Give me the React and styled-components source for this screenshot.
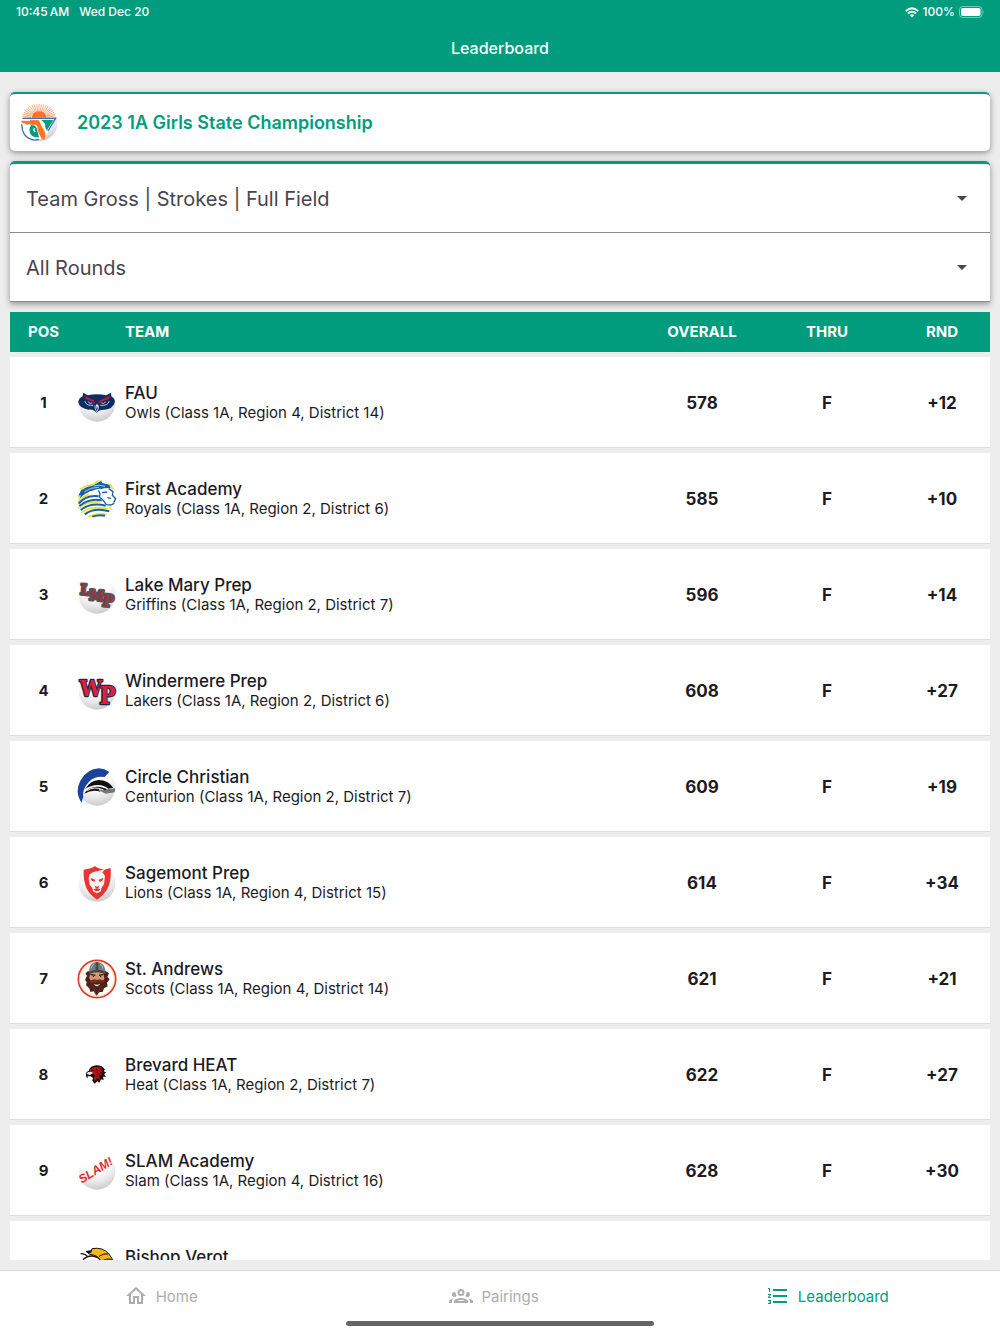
import React, { useState } from 'react';
import styled, { createGlobalStyle, ThemeProvider } from 'styled-components';
import { MdArrowDropDown, MdFormatListNumbered, MdOutlineHome } from 'react-icons/md';

const theme = {
  primary: '#009c7e',
  background: '#ededed',
  surface: '#ffffff',
  text: '#1c1b1f',
  textMuted: '#49454f',
  inactive: '#aeaeae',
  border: '#dcdcdc',
};

const GlobalStyle = createGlobalStyle`
  * {
    box-sizing: border-box;
  }

  body {
    margin: 0;
    font-family: Inter, "Liberation Sans", sans-serif;
    color: ${props => props.theme.text};
    background: ${props => props.theme.background};
  }
`;

const Screen = styled.div`
  display: flex;
  flex-direction: column;
  height: 100vh;
`;

const Header = styled.header`
  background: ${props => props.theme.primary};
  color: #fff;
`;

const StatusBar = styled.div`
  display: flex;
  justify-content: space-between;
  padding: 0 15px 0 16px;
  font-size: 12px;
  font-weight: 500;
  line-height: 24px;
`;

const StatusGroup = styled.div`
  display: flex;
  align-items: center;
  gap: ${props => props.$gap}px;
`;

const ScreenTitle = styled.h1`
  margin: 0;
  font-size: 16px;
  font-weight: 500;
  line-height: 48px;
  text-align: center;
`;

const Main = styled.main`
  flex: 1;
  min-height: 0;
  display: flex;
  flex-direction: column;
  gap: 10px;
  padding: 20px 10px 10px;
`;

const Card = styled.section`
  flex-shrink: 0;
  background: ${props => props.theme.surface};
  border-top: ${props => props.$accent}px solid ${props => props.theme.primary};
  border-radius: ${props => (props.$flatBottom ? '5px 5px 0 0' : '5px')};
  box-shadow: 0 2px 6px rgba(0, 0, 0, 0.4);
`;

const EventHeading = styled.div`
  display: flex;
  align-items: center;
  gap: 19px;
  padding: 10px 10px 9px;
`;

const EventName = styled.h2`
  margin: 0;
  font-size: 18px;
  font-weight: 600;
  line-height: 24px;
  color: ${props => props.theme.primary};
`;

const FilterField = styled.div`
  position: relative;
  border-bottom: 1px solid #8b8b8d;

  svg {
    position: absolute;
    top: 50%;
    right: 16px;
    font-size: 24px;
    color: ${props => props.theme.textMuted};
    transform: translateY(-50%);
    pointer-events: none;
  }
`;

const FilterSelect = styled.select`
  display: block;
  width: 100%;
  height: 68px;
  padding: 2px 48px 0 16px;
  border: 0;
  background: transparent;
  appearance: none;
  font-family: inherit;
  font-size: 20px;
  color: ${props => props.theme.textMuted};
`;

const Standings = styled.div`
  flex: 1;
  min-height: 0;
  overflow-y: auto;
  scrollbar-width: none;
`;

const Table = styled.table`
  width: 100%;
  margin-top: -5px;
  border-spacing: 0 5px;
`;

const HeadCell = styled.th`
  width: ${props => (props.$width ? `${props.$width}px` : 'auto')};
  padding: 10px 0 10px ${props => props.$indent || 0}px;
  background: ${props => props.theme.primary};
  color: #fff;
  font-size: 15px;
  font-weight: 700;
  line-height: 20px;
  text-align: ${props => (props.$indent ? 'left' : 'center')};
`;

const Cell = styled.td`
  padding: 26px 0 24px;
  background: ${props => props.theme.surface};
  border-bottom: 1px solid ${props => props.theme.border};
  font-size: ${props => (props.$small ? 15 : 17)}px;
  font-weight: 700;
  line-height: 20px;
  text-align: center;
`;

const Team = styled.div`
  display: flex;
  align-items: center;
  gap: 8px;
  text-align: left;
`;

const TeamName = styled.div`
  font-size: 17px;
  font-weight: 500;
`;

const TeamDetail = styled.div`
  font-size: 15px;
  font-weight: 400;
`;

const Logo = styled.svg`
  flex-shrink: 0;
  width: ${props => props.$size}px;
  height: ${props => props.$size}px;
  display: block;
`;

const Footer = styled.footer`
  background: ${props => props.theme.surface};
  border-top: 1px solid ${props => props.theme.border};
  padding-bottom: 8px;
`;

const Tabs = styled.nav`
  display: grid;
  grid-template-columns: repeat(3, 1fr);
`;

const Tab = styled.a`
  display: flex;
  align-items: center;
  justify-content: center;
  gap: 8px;
  height: 50px;
  padding-right: 12px;
  font-size: 15px;
  color: ${props => (props.$active ? props.theme.primary : props.theme.inactive)};
  text-decoration: none;

  svg {
    font-size: 24px;
  }
`;

const HomeIndicator = styled.div`
  width: 308px;
  height: 5px;
  margin: 0 auto;
  border-radius: 3px;
  background: #666;
`;

const WifiIcon = () => (
  <svg width="14" height="11" viewBox="0 0 14 11" fill="none" stroke="#fff" strokeWidth="1.9">
    <path d="M0.8 4.1Q7 -1.6 13.2 4.1" />
    <path d="M3 6.5Q7 3 11 6.5" />
    <path d="M7 10.4L4.8 8.2Q7 6.4 9.2 8.2Z" fill="#fff" stroke="none" />
  </svg>
);

const BatteryIcon = () => (
  <svg width="26" height="12" viewBox="0 0 26 12">
    <rect x="0.5" y="0.5" width="22.5" height="11" rx="3.2" fill="none" stroke="#fff" strokeOpacity="0.45" />
    <rect x="2" y="2" width="19.5" height="8" rx="1.8" fill="#fff" />
    <path d="M24.3 4.2Q26 6 24.3 7.8Z" fill="#fff" fillOpacity="0.5" />
  </svg>
);

const GroupIcon = () => (
  <svg width="24" height="24" viewBox="0 0 24 24" fill="currentColor">
    <path d="M12,5A3.5,3.5 0 0,0 8.5,8.5A3.5,3.5 0 0,0 12,12A3.5,3.5 0 0,0 15.5,8.5A3.5,3.5 0 0,0 12,5M12,7A1.5,1.5 0 0,1 13.5,8.5A1.5,1.5 0 0,1 12,10A1.5,1.5 0 0,1 10.5,8.5A1.5,1.5 0 0,1 12,7M5.5,8A2.5,2.5 0 0,0 3,10.5C3,11.44 3.53,12.25 4.29,12.68C4.65,12.88 5.06,13 5.5,13C5.94,13 6.35,12.88 6.71,12.68C7.08,12.47 7.39,12.17 7.62,11.81C6.89,10.86 6.5,9.7 6.5,8.5C6.5,8.41 6.5,8.31 6.5,8.22C6.2,8.08 5.86,8 5.5,8M18.5,8C18.14,8 17.8,8.08 17.5,8.22C17.5,8.31 17.5,8.41 17.5,8.5C17.5,9.7 17.11,10.86 16.38,11.81C16.5,12 16.63,12.15 16.78,12.3C16.94,12.45 17.1,12.58 17.29,12.68C17.65,12.88 18.06,13 18.5,13C18.94,13 19.35,12.88 19.71,12.68C20.47,12.25 21,11.44 21,10.5A2.5,2.5 0 0,0 18.5,8M12,14C9.66,14 5,15.17 5,17.5V19H19V17.5C19,15.17 14.34,14 12,14M4.71,14.55C2.78,14.78 0,15.76 0,17.5V19H3V17.07C3,16.06 3.69,15.22 4.71,14.55M19.29,14.55C20.31,15.22 21,16.06 21,17.07V19H24V17.5C24,15.76 21.22,14.78 19.29,14.55M12,16C13.53,16 15.24,16.5 16.23,17H7.77C8.76,16.5 10.47,16 12,16Z" />
  </svg>
);

const Gradients = () => (
  <svg width="0" height="0" style={{ position: 'absolute' }} aria-hidden="true">
    <defs>
      <radialGradient id="ball" cx="0.42" cy="0.12" r="0.92">
        <stop offset="0.45" stopColor="#ffffff" />
        <stop offset="0.75" stopColor="#e6e6e6" />
        <stop offset="1" stopColor="#c6c6c6" />
      </radialGradient>
    </defs>
  </svg>
);

const Ball = () => <circle cx="60" cy="61" r="55" fill="url(#ball)" />;

const rays = Array.from({ length: 23 }, (_, i) => {
  const angle = Math.PI + (i * Math.PI) / 22;
  return {
    x1: 57 + 24 * Math.cos(angle),
    y1: 42 + 18 * Math.sin(angle),
    x2: 57 + 51 * Math.cos(angle),
    y2: 42 + 42 * Math.sin(angle),
  };
});

const EventLogo = () => (
  <Logo $size={38} viewBox="0 0 114 114">
    <circle cx="58" cy="57" r="54" fill="url(#ball)" />
    <path d="M0 0H114V42H0Z" fill="#fff" />
    <g stroke="#f88f52" strokeWidth="2.2">
      {rays.map((ray, i) => (
        <line key={i} {...ray} />
      ))}
    </g>
    <path d="M35 41Q38 22 57 22Q76 22 80 41Z" fill="#ff7224" />
    <path d="M8 43H109L87 80Q74 106 46 109Q8 106 5 60Z" fill="#fff" />
    <path d="M8 43H107L84 81" fill="none" stroke="#3c6cb5" strokeWidth="4" />
    <path d="M5 61Q6 98 35 107Q45 110 57 106" fill="none" stroke="#3c6cb5" strokeWidth="4" />
    <path d="M64 48H100L80 80Q73 70 76 60Z" fill="#009c7e" />
    <path d="M30 60Q44 60 50 72L57 100Q33 102 29 84Q27 71 33 65Z" fill="#009c7e" />
    <path d="M43 72Q39 79 46 84" fill="none" stroke="#fff" strokeWidth="4" />
    <path d="M4 50L30 50L31 47L57 48L65 66Q77 82 77 94Q78 107 69 109Q60 99 56 87Q51 79 52 68Q46 59 39 64L30 60L21 63Q16 57 4 57Z" fill="#ff7224" stroke="#fff" strokeWidth="1" />
  </Logo>
);

const OwlLogo = () => (
  <Logo $size={40} viewBox="0 0 120 120">
    <Ball />
    <path d="M19 29L32 37Q60 31 87 37L102 29L103 40Q116 48 113 59Q108 77 82 80Q70 80 65 84L59 89L53 84Q45 79 34 80Q7 76 4 58Q4 46 17 40Z" fill="#0d2c62" />
    <path d="M22 38L50 52L56 63Q38 51 25 49Z" fill="#c4143c" />
    <path d="M99 38L69 52L63 63Q82 51 96 49Z" fill="#c4143c" />
    <g fill="none" stroke="#dce3f0" strokeWidth="2.5">
      <path d="M23 54Q29 70 49 67" />
      <path d="M97 54Q91 70 70 67" />
      <path d="M33 56Q39 65 46 60M86 56Q80 65 73 60" />
      <path d="M54 67Q53 79 59 86Q66 79 64 67" />
    </g>
    <path d="M57 66Q60 61 63 66L60 80Z" fill="#fff" />
  </Logo>
);

const RoyalLogo = () => (
  <Logo $size={40} viewBox="0 0 120 120">
    <path d="M9 32L30 22L28 16L45 16L63 7L73 3L78 9L99 13L104 25L111 35L109 48L117 58L111 79L96 83L105 92Q91 114 60 115Q23 113 9 87L2 81Q5 70 3 60L9 50L2 53Z" fill="#fff" />
    <g fill="none" stroke="#f0df2e" strokeWidth="5">
      <path d="M9 31L31 20L46 17L63 7L75 6M4 56L15 42M3 68Q20 50 36 46M4 88Q28 66 70 69M13 101Q42 78 92 90M34 113Q58 101 88 106M99 15L107 30M97 84L105 92" />
    </g>
    <path d="M12 34L32 23L46 20L72 6L76 12L97 17L101 28Q86 25 73 30Q61 28 50 34Q24 40 7 60L12 48L4 50Z" fill="#1761a5" />
    <g fill="none" stroke="#fff" strokeWidth="2">
      <path d="M22 38Q42 24 66 25M50 21Q66 16 84 22" />
    </g>
    <g fill="none" stroke="#1761a5" strokeWidth="6">
      <path d="M5 74Q29 46 65 52M7 81Q37 56 74 64M11 93Q42 69 86 80M23 106Q52 84 97 97M46 113Q66 106 84 110" />
      <path d="M64 34Q72 45 67 53Q79 62 88 77L101 78L112 73" strokeWidth="4" />
      <path d="M75 41L91 39M95 29L108 38L106 49L116 59L110 71M91 56L102 58" strokeWidth="4" />
    </g>
  </Logo>
);

const LmpLogo = () => (
  <Logo $size={40} viewBox="0 0 120 120">
    <Ball />
    <g
      fontFamily="'DejaVu Serif Condensed', 'DejaVu Serif', serif"
      fontWeight="700"
      fill="#9a3443"
      stroke="#545457"
      strokeWidth="9"
      strokeLinejoin="round"
      paintOrder="stroke"
    >
      <text x="9" y="58" fontSize="43" transform="rotate(5 9 58)">L</text>
      <text x="75" y="93" fontSize="50" transform="rotate(5 75 93)">P</text>
      <text x="36" y="74" fontSize="43" transform="rotate(5 36 74)">M</text>
    </g>
  </Logo>
);

const WpLogo = () => (
  <Logo $size={40} viewBox="0 0 120 120">
    <Ball />
    <g
      fontFamily="'DejaVu Serif Condensed', 'DejaVu Serif', serif"
      fontWeight="700"
      fill="#dd2138"
      stroke="#102a5c"
      strokeWidth="7"
      strokeLinejoin="round"
      paintOrder="stroke"
    >
      <text x="8" y="76" fontSize="66">W</text>
      <text x="67" y="99" fontSize="72">P</text>
    </g>
  </Logo>
);

const CenturionLogo = () => (
  <Logo $size={40} viewBox="0 0 120 120">
    <Ball />
    <path d="M14 107Q-8 76 10 41Q30 5 66 4Q83 5 97 15L83 30Q55 25 36 44Q15 67 19 88Z" fill="#1c439b" />
    <path d="M25 66Q39 40 65 39Q94 40 109 62L94 65Q78 53 63 54Q40 55 25 66Z" fill="#111" />
    <path d="M22 80Q36 58 61 59Q81 60 91 68L114 65L112 74L88 78Q75 67 65 67L70 74Q46 66 22 80Z" fill="#111" />
    <path d="M31 71Q50 56 80 69" fill="none" stroke="#fff" strokeWidth="3" />
    <path d="M83 69L114 64L112 76L86 80Q70 70 60 71Q72 68 83 69Z" fill="#777" />
  </Logo>
);

const LionLogo = () => (
  <Logo $size={40} viewBox="0 0 120 120">
    <Ball />
    <path d="M20 20Q44 17 54 9Q62 17 82 20L101 15Q104 53 91 78Q79 98 60 110Q40 97 30 79Q18 53 20 20Z" fill="#e93434" />
    <path d="M38 34Q50 25 60 25L84 19L76 28L84 39L81 64L73 75L72 85L60 91L48 85L46 75L38 65L35 45Z" fill="#f7f4f4" />
    <path d="M41 45L55 50L52 57L43 52ZM79 45L65 50L68 57L77 52Z" fill="#e93434" />
    <path d="M53 68L60 71L67 68L64 76H56ZM49 79L60 76L71 79L65 84H55Z" fill="#e93434" />
  </Logo>
);

const ScotLogo = () => (
  <Logo $size={40} viewBox="0 0 120 120">
    <circle cx="60" cy="60" r="56" fill="#fff" stroke="#e23434" strokeWidth="5" />
    <circle cx="60" cy="60" r="52" fill="none" stroke="#f2cc58" strokeWidth="2" />
    <path d="M32 37L25 44L30 50L24 63L29 69L27 79L37 88L40 99L50 97L58 110L68 99L77 99L81 88L92 82L90 71L98 61L91 54L96 43L85 35Z" fill="#512118" />
    <path d="M39 42Q59 34 80 43L82 59L77 67L60 63L43 67L37 58Z" fill="#d99873" />
    <path d="M36 41Q35 10 60 9Q84 10 86 41Q62 31 36 41Z" fill="#737c7d" />
    <path d="M56 10H64V35H56ZM36 39Q60 25 86 39V45Q60 34 36 45Z" fill="#414a4c" />
    <path d="M42 29Q44 18 51 16M69 16Q78 20 78 29" fill="none" stroke="#aeb5b3" strokeWidth="3" />
    <path d="M40 46L55 49M66 49L80 46" stroke="#3b1a15" strokeWidth="4" />
    <circle cx="49" cy="52" r="2" fill="#111" />
    <circle cx="71" cy="52" r="2" fill="#111" />
    <path d="M36 68Q49 56 60 63Q71 56 84 68Q72 76 60 69Q47 76 36 68Z" fill="#6e2e20" />
    <path d="M50 75Q60 79 70 75Q66 81 60 82Q53 81 50 75Z" fill="#f2e6dc" />
    <path d="M40 80Q52 84 56 102M77 80Q66 89 62 102" fill="none" stroke="#7e3826" strokeWidth="2" />
  </Logo>
);

const HawkLogo = () => (
  <Logo $size={40} viewBox="0 0 120 120">
    <path d="M27 63L28 52L35 47Q40 32 59 31Q77 31 84 44L80 48L88 53L81 57L87 65L78 65L80 75L72 73L67 83L61 79L53 86L46 77L48 68L40 64L32 64L31 71Z" fill="#16090a" />
    <path d="M38 46Q45 35 61 35Q74 36 79 44L68 43L80 54L66 50L78 62L65 58L70 71L60 70L54 79L50 72L54 60L44 55Z" fill="#b4121b" />
    <path d="M30 53Q40 47 48 54L39 60L31 58Z" fill="#e9e9e9" />
    <path d="M42 46L54 48M58 40Q64 47 60 65" fill="none" stroke="#5c0b10" strokeWidth="3" />
  </Logo>
);

const SlamLogo = () => (
  <Logo $size={40} viewBox="0 0 120 120">
    <Ball />
    <text
      transform="translate(14 98) rotate(-32)"
      fontFamily="'Liberation Sans', sans-serif"
      fontSize="36"
      fontStyle="italic"
      fill="#e22c36"
    >
      SLAM!
    </text>
  </Logo>
);

const VikingLogo = () => (
  <Logo $size={40} viewBox="0 0 120 120">
    <Ball />
    <path d="M11 20Q26 20 33 31M18 38Q29 26 47 27Q69 31 73 44" fill="none" stroke="#111" strokeWidth="4" />
    <path d="M27 13L42 16L45 5Q78 -1 96 21Q108 34 108 50L73 45Q65 24 38 22Z" fill="#f8b617" stroke="#111" strokeWidth="3" />
    <path d="M66 28Q81 18 94 21M73 42Q90 33 104 37" fill="none" stroke="#111" strokeWidth="3" />
    <path d="M28 12L36 21L45 9Z" fill="#111" />
  </Logo>
);

const teams = [
  { pos: 1, name: 'FAU', detail: 'Owls (Class 1A, Region 4, District 14)', overall: 578, rnd: '+12', logo: OwlLogo },
  { pos: 2, name: 'First Academy', detail: 'Royals (Class 1A, Region 2, District 6)', overall: 585, rnd: '+10', logo: RoyalLogo },
  { pos: 3, name: 'Lake Mary Prep', detail: 'Griffins (Class 1A, Region 2, District 7)', overall: 596, rnd: '+14', logo: LmpLogo },
  { pos: 4, name: 'Windermere Prep', detail: 'Lakers (Class 1A, Region 2, District 6)', overall: 608, rnd: '+27', logo: WpLogo },
  { pos: 5, name: 'Circle Christian', detail: 'Centurion (Class 1A, Region 2, District 7)', overall: 609, rnd: '+19', logo: CenturionLogo },
  { pos: 6, name: 'Sagemont Prep', detail: 'Lions (Class 1A, Region 4, District 15)', overall: 614, rnd: '+34', logo: LionLogo },
  { pos: 7, name: 'St. Andrews', detail: 'Scots (Class 1A, Region 4, District 14)', overall: 621, rnd: '+21', logo: ScotLogo },
  { pos: 8, name: 'Brevard HEAT', detail: 'Heat (Class 1A, Region 2, District 7)', overall: 622, rnd: '+27', logo: HawkLogo },
  { pos: 9, name: 'SLAM Academy', detail: 'Slam (Class 1A, Region 4, District 16)', overall: 628, rnd: '+30', logo: SlamLogo },
  { name: 'Bishop Verot', logo: VikingLogo },
];

const tabs = [
  { label: 'Home', href: '#home', icon: MdOutlineHome },
  { label: 'Pairings', href: '#pairings', icon: GroupIcon },
  { label: 'Leaderboard', href: '#leaderboard', icon: MdFormatListNumbered },
];

const Filter = ({ label, options }) => {
  const [value, setValue] = useState(options[0]);

  return (
    <FilterField>
      <FilterSelect aria-label={label} value={value} onChange={e => setValue(e.target.value)}>
        {options.map(option => (
          <option key={option}>{option}</option>
        ))}
      </FilterSelect>
      <MdArrowDropDown />
    </FilterField>
  );
};

const TeamRow = ({ team }) => {
  const TeamLogo = team.logo;

  return (
    <tr>
      <Cell $small>{team.pos}</Cell>
      <Cell>
        <Team>
          <TeamLogo />
          <div>
            <TeamName>{team.name}</TeamName>
            <TeamDetail>{team.detail || '\u00a0'}</TeamDetail>
          </div>
        </Team>
      </Cell>
      <Cell>{team.overall}</Cell>
      <Cell>{team.overall && 'F'}</Cell>
      <Cell>{team.rnd}</Cell>
    </tr>
  );
};

const App = () => (
  <ThemeProvider theme={theme}>
    <GlobalStyle />
    <Gradients />
    <Screen>
      <Header>
        <StatusBar>
          <StatusGroup $gap={10}>
            <span>10:45{'\u202f'}AM</span>
            <span>Wed Dec 20</span>
          </StatusGroup>
          <StatusGroup $gap={4}>
            <WifiIcon />
            <span>100%</span>
            <BatteryIcon />
          </StatusGroup>
        </StatusBar>
        <ScreenTitle>Leaderboard</ScreenTitle>
      </Header>

      <Main>
        <Card $accent={2}>
          <EventHeading>
            <EventLogo />
            <EventName>2023 1A Girls State Championship</EventName>
          </EventHeading>
        </Card>

        <Card $accent={3} $flatBottom>
          <Filter label="Leaderboard" options={['Team Gross | Strokes | Full Field']} />
          <Filter label="Rounds" options={['All Rounds']} />
        </Card>

        <Standings>
          <Table>
            <thead>
              <tr>
                <HeadCell $width={67}>POS</HeadCell>
                <HeadCell $indent={48}>TEAM</HeadCell>
                <HeadCell $width={116}>OVERALL</HeadCell>
                <HeadCell $width={134}>THRU</HeadCell>
                <HeadCell $width={96}>RND</HeadCell>
              </tr>
            </thead>
            <tbody>
              {teams.map(team => (
                <TeamRow key={team.name} team={team} />
              ))}
            </tbody>
          </Table>
        </Standings>
      </Main>

      <Footer>
        <Tabs>
          {tabs.map(({ label, href, icon: Icon }) => (
            <Tab key={label} href={href} $active={label === 'Leaderboard'}>
              <Icon />
              {label}
            </Tab>
          ))}
        </Tabs>
        <HomeIndicator />
      </Footer>
    </Screen>
  </ThemeProvider>
);

export default App;
